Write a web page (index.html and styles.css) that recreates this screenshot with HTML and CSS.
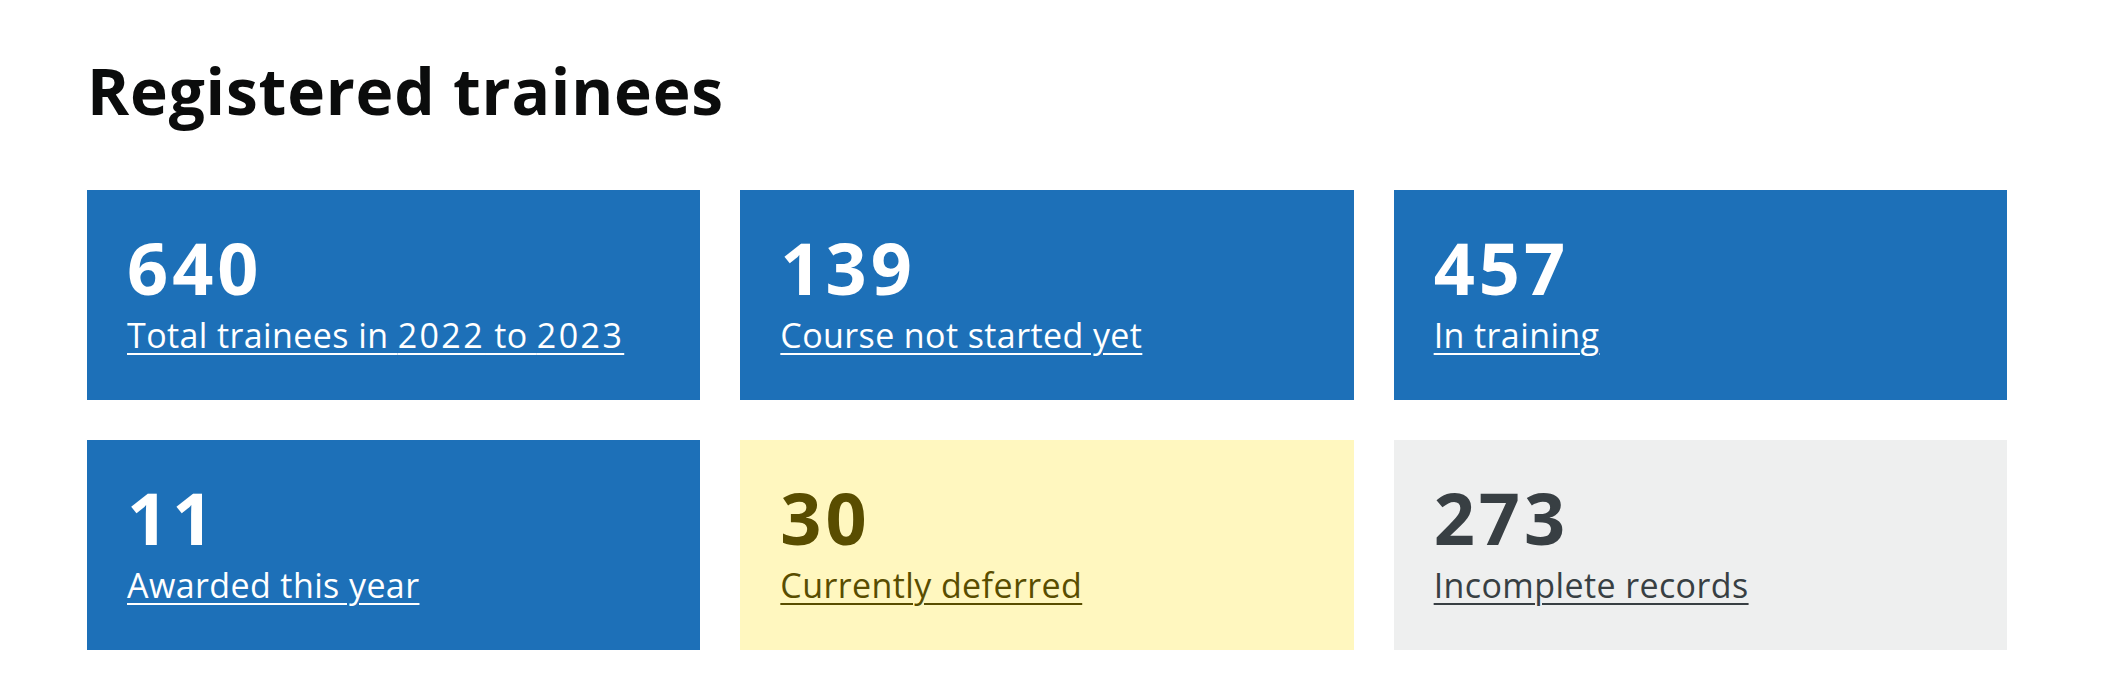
FILE: index.html
```html
<!DOCTYPE html>
<html lang="en">
<head>
<meta charset="utf-8">
<title>Registered trainees</title>
<link rel="stylesheet" href="styles.css">
</head>
<body>
<main class="page">
  <h1 class="heading">Registered trainees</h1>
  <div class="cards">
    <div class="card card--blue">
      <span class="card__count">640</span>
      <a class="card__link" href="#">Total trainees in <span class="year">2022</span> to <span class="year">2023</span></a>
    </div>
    <div class="card card--blue">
      <span class="card__count">139</span>
      <a class="card__link" href="#">Course not started yet</a>
    </div>
    <div class="card card--blue">
      <span class="card__count">457</span>
      <a class="card__link" href="#">In training</a>
    </div>
    <div class="card card--blue">
      <span class="card__count">11</span>
      <a class="card__link" href="#">Awarded this year</a>
    </div>
    <div class="card card--yellow">
      <span class="card__count">30</span>
      <a class="card__link" href="#">Currently deferred</a>
    </div>
    <div class="card card--grey">
      <span class="card__count">273</span>
      <a class="card__link" href="#">Incomplete records</a>
    </div>
  </div>
</main>
</body>
</html>
```

FILE: styles.css
```css
html, body {
  margin: 0;
  padding: 0;
  background: #ffffff;
}

body {
  font-family: "Open Sans", "Noto Sans", Arial, sans-serif;
  color: #0b0c0c;
}

.page {
  padding: 57px 95px 0 87px;
  width: 1920px;
}

.heading {
  margin: 0 0 66px;
  font-size: 64px;
  line-height: 67px;
  font-weight: 700;
  letter-spacing: 0.8px;
  color: #0b0c0c;
}

.cards {
  display: grid;
  grid-template-columns: repeat(3, 1fr);
  grid-auto-rows: 210px;
  column-gap: 40px;
  row-gap: 40px;
}

.card {
  box-sizing: border-box;
  padding: 40px 40px 0 40px;
  display: flex;
  flex-direction: column;
  align-items: flex-start;
}

.card__count {
  display: block;
  font-size: 72px;
  line-height: 74px;
  font-weight: 700;
  letter-spacing: 4px;
}

.card__link {
  display: block;
  margin-top: 11px;
  font-size: 34px;
  line-height: 40px;
  font-weight: 400;
  letter-spacing: 0.4px;
  color: inherit;
  text-decoration: underline;
  text-decoration-thickness: 2px;
  text-underline-offset: 5px;
}

.year {
  letter-spacing: 2.4px;
}

.card--blue {
  background: #1d70b8;
  color: #ffffff;
}

.card--yellow {
  background: #fff7bf;
  color: #594d00;
}

.card--grey {
  background: #eeefef;
  color: #383f43;
}
```
